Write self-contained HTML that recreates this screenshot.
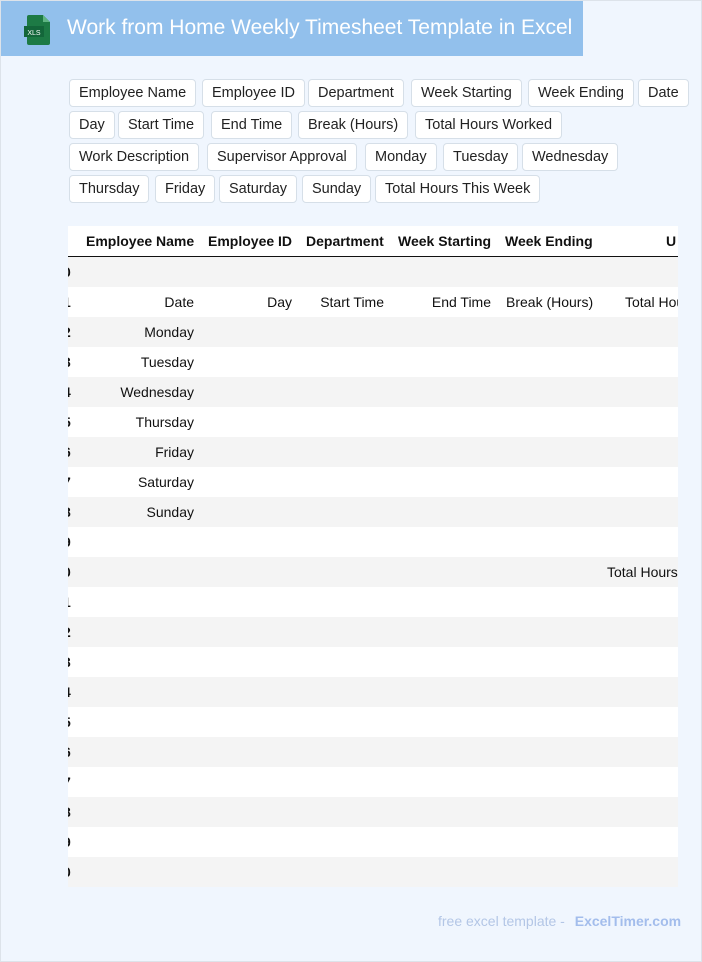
<!DOCTYPE html>
<html><head><style>
body{margin:0;width:702px;height:962px;background:#f0f6fe;font-family:"Liberation Sans",Arial,sans-serif;position:relative;overflow:hidden}
.frame{position:absolute;left:0;top:0;width:700px;height:960px;border:1px solid #dde3ea}
.hdr{position:absolute;left:1px;top:1px;width:582px;height:55px;background:#92c0ec}
.hdr .t{position:absolute;left:66px;top:15px;color:#fff;font-size:21px}
.tag{position:absolute;height:26px;line-height:26px;padding:0 9px;background:#fff;border:1px solid #d6dfe8;border-radius:4px;font-size:14.5px;color:#222;white-space:nowrap}
.tbl{position:absolute;left:68px;top:226px;width:610px;height:661px;overflow:hidden;background:#fff}
.row{position:absolute;left:0;width:610px;height:30px;font-size:14px;color:#111}
.row span{position:absolute;top:7px;white-space:nowrap}
.g{background:#f4f4f4}
.r{text-align:right}
.h span{font-weight:bold}
.n{left:-5px;font-weight:bold}
.foot{position:absolute;top:913px;left:438px;font-size:14px;color:#b3c6e6}
.foot b{color:#a3bdec;margin-left:6px}
</style></head><body>
<div class="frame"></div>
<div class="hdr">
<svg style="position:absolute;left:22px;top:13px" width="28" height="32" viewBox="0 0 28 32"><path d="M6 1h14l7 7v21a2 2 0 0 1-2 2H6a2 2 0 0 1-2-2V3a2 2 0 0 1 2-2z" fill="#1d7a45"/><path d="M20 1v7h7z" fill="#5fb583"/><rect x="1" y="12" width="20" height="11" fill="#13663a"/><text x="11" y="21" font-size="7" fill="#fff" text-anchor="middle" font-family="Liberation Sans">XLS</text></svg>
<div class="t">Work from Home Weekly Timesheet Template in Excel</div></div>

<div class="tag" style="left:69px;top:79px">Employee Name</div>
<div class="tag" style="left:202px;top:79px">Employee ID</div>
<div class="tag" style="left:308px;top:79px">Department</div>
<div class="tag" style="left:411px;top:79px">Week Starting</div>
<div class="tag" style="left:528px;top:79px">Week Ending</div>
<div class="tag" style="left:638px;top:79px">Date</div>
<div class="tag" style="left:69px;top:111px">Day</div>
<div class="tag" style="left:118px;top:111px">Start Time</div>
<div class="tag" style="left:211px;top:111px">End Time</div>
<div class="tag" style="left:298px;top:111px">Break (Hours)</div>
<div class="tag" style="left:415px;top:111px">Total Hours Worked</div>
<div class="tag" style="left:69px;top:143px">Work Description</div>
<div class="tag" style="left:207px;top:143px">Supervisor Approval</div>
<div class="tag" style="left:365px;top:143px">Monday</div>
<div class="tag" style="left:443px;top:143px">Tuesday</div>
<div class="tag" style="left:522px;top:143px">Wednesday</div>
<div class="tag" style="left:69px;top:175px">Thursday</div>
<div class="tag" style="left:155px;top:175px">Friday</div>
<div class="tag" style="left:219px;top:175px">Saturday</div>
<div class="tag" style="left:302px;top:175px">Sunday</div>
<div class="tag" style="left:375px;top:175px">Total Hours This Week</div>

<div class="tbl">
<div class="row h" style="top:0;border-bottom:1px solid #111;height:30px">
<span style="left:18px">Employee Name</span><span style="left:140px">Employee ID</span><span style="left:238px">Department</span><span style="left:330px">Week Starting</span><span style="left:437px">Week Ending</span><span style="left:598px">U</span></div>
<div class="row g" style="top:31px"><span class="n">0</span></div>
<div class="row" style="top:61px"><span class="n">1</span><span class="r" style="right:484px">Date</span><span class="r" style="right:386px">Day</span><span class="r" style="right:294px">Start Time</span><span class="r" style="right:187px">End Time</span><span style="left:438px">Break (Hours)</span><span style="left:557px">Total Hours Worked</span></div>
<div class="row g" style="top:91px"><span class="n">2</span><span class="r" style="right:484px">Monday</span></div>
<div class="row" style="top:121px"><span class="n">3</span><span class="r" style="right:484px">Tuesday</span></div>
<div class="row g" style="top:151px"><span class="n">4</span><span class="r" style="right:484px">Wednesday</span></div>
<div class="row" style="top:181px"><span class="n">5</span><span class="r" style="right:484px">Thursday</span></div>
<div class="row g" style="top:211px"><span class="n">6</span><span class="r" style="right:484px">Friday</span></div>
<div class="row" style="top:241px"><span class="n">7</span><span class="r" style="right:484px">Saturday</span></div>
<div class="row g" style="top:271px"><span class="n">8</span><span class="r" style="right:484px">Sunday</span></div>
<div class="row" style="top:301px"><span class="n">9</span></div>
<div class="row g" style="top:331px"><span class="n">0</span><span style="left:539px">Total Hours This Week</span></div>
<div class="row" style="top:361px"><span class="n">1</span></div>
<div class="row g" style="top:391px"><span class="n">2</span></div>
<div class="row" style="top:421px"><span class="n">3</span></div>
<div class="row g" style="top:451px"><span class="n">4</span></div>
<div class="row" style="top:481px"><span class="n">5</span></div>
<div class="row g" style="top:511px"><span class="n">6</span></div>
<div class="row" style="top:541px"><span class="n">7</span></div>
<div class="row g" style="top:571px"><span class="n">8</span></div>
<div class="row" style="top:601px"><span class="n">9</span></div>
<div class="row g" style="top:631px"><span class="n">0</span></div>
</div>
<div class="foot">free excel template - <b>ExcelTimer.com</b></div>
</body></html>
